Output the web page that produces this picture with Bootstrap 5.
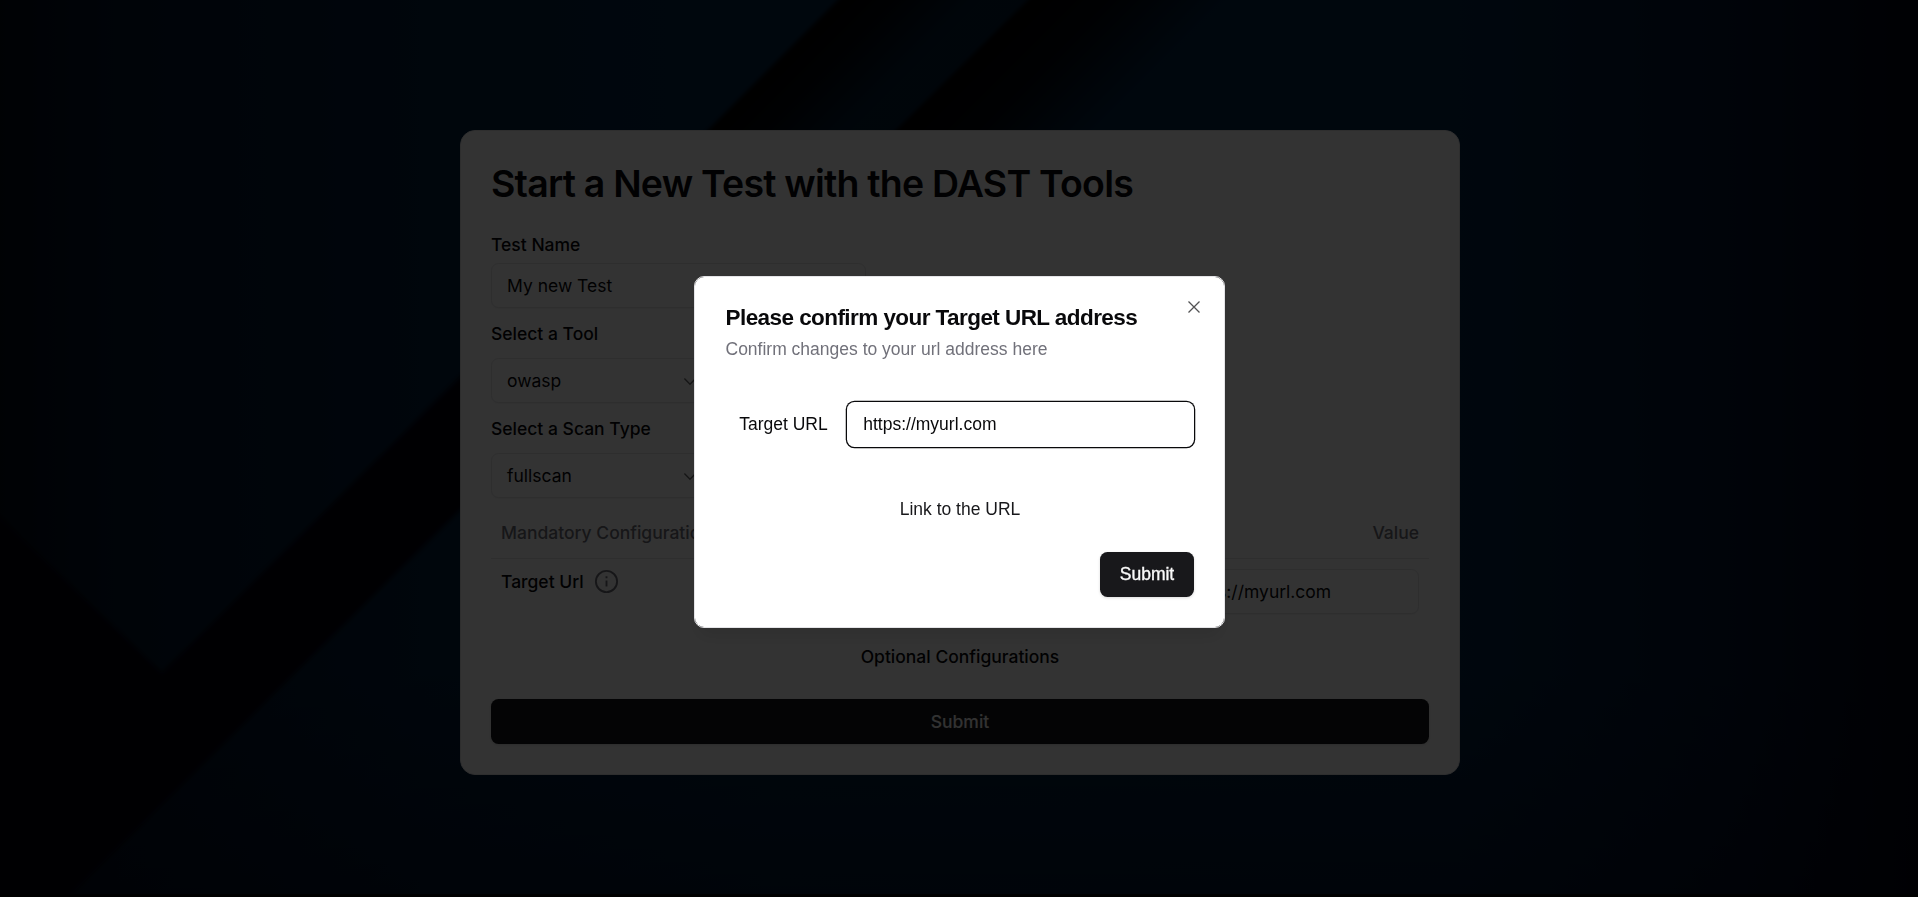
<!DOCTYPE html>
<html lang="en">
<head>
<meta charset="utf-8">
<title>DAST Tools</title>
<link href="https://cdn.jsdelivr.net/npm/bootstrap@5.3.0/dist/css/bootstrap.min.css" rel="stylesheet">
<style>
body{font-family:Inter,sans-serif;font-size:17.5px;line-height:25px;color:#09090b;background:#000;overflow:hidden}
.page{height:897px;padding-top:130px;background:#000}
.backdrop-art{position:absolute;top:0;left:0;width:1918px;height:894px}
.panel{position:relative;width:1000px;height:644.5px;margin-left:460px;padding:30px;background:#fff;border:1.25px solid #e4e4e7;border-radius:15px}
.panel h1{font-size:37.5px;line-height:45px;font-weight:600;letter-spacing:-.8px;margin:0 0 26px}
.fw-label{font-weight:500;line-height:25px}
.field{height:45px;border:1.25px solid #e4e4e7;border-radius:7.5px;padding:0 15px;font-size:17.5px;color:#09090b;background:#fff;box-shadow:0 1px 2px rgba(0,0,0,.05)}
.name-field{margin-top:6px;width:375px}
.pick-label{margin-top:13px}
.pick-field{margin-top:12px;width:225px}
.muted{color:#71717a}
.conf-head{margin-top:22px;padding:0 10px 12.5px;border-bottom:1.25px solid #e4e4e7}
.conf-row{padding:10px 10px 0}
.conf-name{gap:10px}
.val-field{width:250px}
.opt{margin-top:30px}
.dark-btn{height:45px;border-radius:7.5px;border:0;background:#18181b;color:#fafafa;font-size:17.5px;font-weight:500;box-shadow:0 1px 3px rgba(0,0,0,.15)}
.shade{position:fixed;inset:0;background:rgba(0,0,0,.8)}
.modal-dialog.confirm{width:531px;max-width:none;margin:276px 0 0 694px;font-family:"Liberation Sans",Arial,sans-serif}
.confirm .modal-content{height:351.5px;padding:30px;border:1.25px solid #e4e4e7;border-radius:10px;box-shadow:0 12px 18px -4px rgba(0,0,0,.1);color:#09090b}
.confirm h2{font-size:22.5px;line-height:22.5px;font-weight:700;letter-spacing:-.025em;margin:0 0 0 .5px}
.desc{margin:7px 0 0 .5px}
.url-row{gap:19.5px;margin-top:40px}
.url-field{width:346.75px;border-color:transparent;box-shadow:0 0 0 1.25px #09090b}
.link-row{margin-top:50px;padding-left:1px;color:#18181b}
.confirm .dark-btn{width:94px;-webkit-text-stroke:.35px #fafafa}
.close-x{position:absolute;top:20px;right:20px;width:20px;height:20px;padding:0;border:0;background:none;opacity:.7;display:flex}
</style>
</head>
<body>
<div class="page">
<svg class="backdrop-art" viewBox="0 0 1918 894" preserveAspectRatio="none">
<defs>
<linearGradient id="base"><stop offset="0" stop-color="#000a18"/><stop offset=".06" stop-color="#00142a"/><stop offset=".22" stop-color="#001e3c"/><stop offset=".4" stop-color="#002544"/><stop offset=".76" stop-color="#002344"/><stop offset=".9" stop-color="#001430"/><stop offset="1" stop-color="#000514"/></linearGradient>
<linearGradient id="foldA" gradientUnits="userSpaceOnUse" x1="773" y1="65" x2="843" y2="135"><stop offset="0" stop-color="#000003"/><stop offset=".4" stop-color="#000003" stop-opacity=".8"/><stop offset="1" stop-color="#000003" stop-opacity=".2"/></linearGradient>
<linearGradient id="foldB" gradientUnits="userSpaceOnUse" x1="963" y1="65" x2="1063" y2="165"><stop offset="0" stop-color="#000003"/><stop offset=".4" stop-color="#000003" stop-opacity=".8"/><stop offset="1" stop-color="#000003" stop-opacity="0"/></linearGradient>
<linearGradient id="low" x1="0" y1="0" x2="0" y2="1"><stop offset=".75" stop-color="#000010" stop-opacity="0"/><stop offset="1" stop-color="#000010" stop-opacity=".35"/></linearGradient>
<filter id="soft"><feGaussianBlur stdDeviation="2"/></filter>
</defs>
<rect width="1918" height="894" fill="url(#base)"/>
<rect width="1918" height="894" fill="url(#low)"/>
<g filter="url(#soft)">
<path d="M848-10 698 140H886L1038-10Z" fill="url(#foldA)"/>
<path d="M1038-10 886 140H1260V-10Z" fill="url(#foldB)"/>
<path d="M-10 508 162 673 470 367V500L60 905H-10Z" fill="#00020e"/>
</g>
</svg>
<main class="panel d-flex flex-column">
<h1>Start a New Test with the DAST Tools</h1>
<label class="fw-label">Test Name</label>
<div class="field name-field d-flex align-items-center">My new Test</div>
<label class="fw-label pick-label">Select a Tool</label>
<div class="field pick-field d-flex align-items-center justify-content-between">owasp
<svg width="20" height="20" viewBox="0 0 20 20" fill="none" stroke="#09090b" stroke-width="1.4" opacity=".6"><path d="M4.4 7.6 10 13.2 15.6 7.6"/></svg></div>
<label class="fw-label pick-label">Select a Scan Type</label>
<div class="field pick-field d-flex align-items-center justify-content-between">fullscan
<svg width="20" height="20" viewBox="0 0 20 20" fill="none" stroke="#09090b" stroke-width="1.4" opacity=".6"><path d="M4.4 7.6 10 13.2 15.6 7.6"/></svg></div>
<div class="conf-head d-flex justify-content-between muted fw-label">
<span>Mandatory Configurations</span><span>Value</span></div>
<div class="conf-row d-flex justify-content-between align-items-start">
<div class="d-flex align-items-center fw-label conf-name">Target Url
<svg width="25" height="25" viewBox="0 0 25 25" fill="none" stroke="#71717a" stroke-width="1.9"><circle cx="12.5" cy="12.5" r="10.6"/><path d="M12.5 11.5v6M12.5 7.2v2"/></svg></div>
<div class="field d-flex align-items-center val-field">https://myurl.com</div></div>
<div class="text-center fw-label opt">Optional Configurations</div>
<button class="dark-btn w-100 mt-auto">Submit</button>
</main>
</div>
<div class="shade"></div>
<div class="modal d-block" tabindex="-1" role="dialog">
<div class="modal-dialog confirm"><div class="modal-content">
<h2>Please confirm your Target URL address</h2>
<p class="muted desc">Confirm changes to your url address here</p>
<div class="d-flex align-items-center justify-content-end url-row"><span>Target URL</span>
<div class="field url-field d-flex align-items-center">https://myurl.com</div></div>
<div class="text-center link-row">Link to the URL</div>
<button class="dark-btn align-self-end mt-auto px-0">Submit</button>
<button class="close-x" aria-label="Close"><svg width="20" height="20" viewBox="0 0 20 20" stroke="#09090b" stroke-width="1.3"><path d="M4.5 4.5 15.5 15.5M15.5 4.5 4.5 15.5"/></svg></button>
</div></div></div>
<script src="https://cdn.jsdelivr.net/npm/bootstrap@5.3.0/dist/js/bootstrap.bundle.min.js"></script>
</body>
</html>
